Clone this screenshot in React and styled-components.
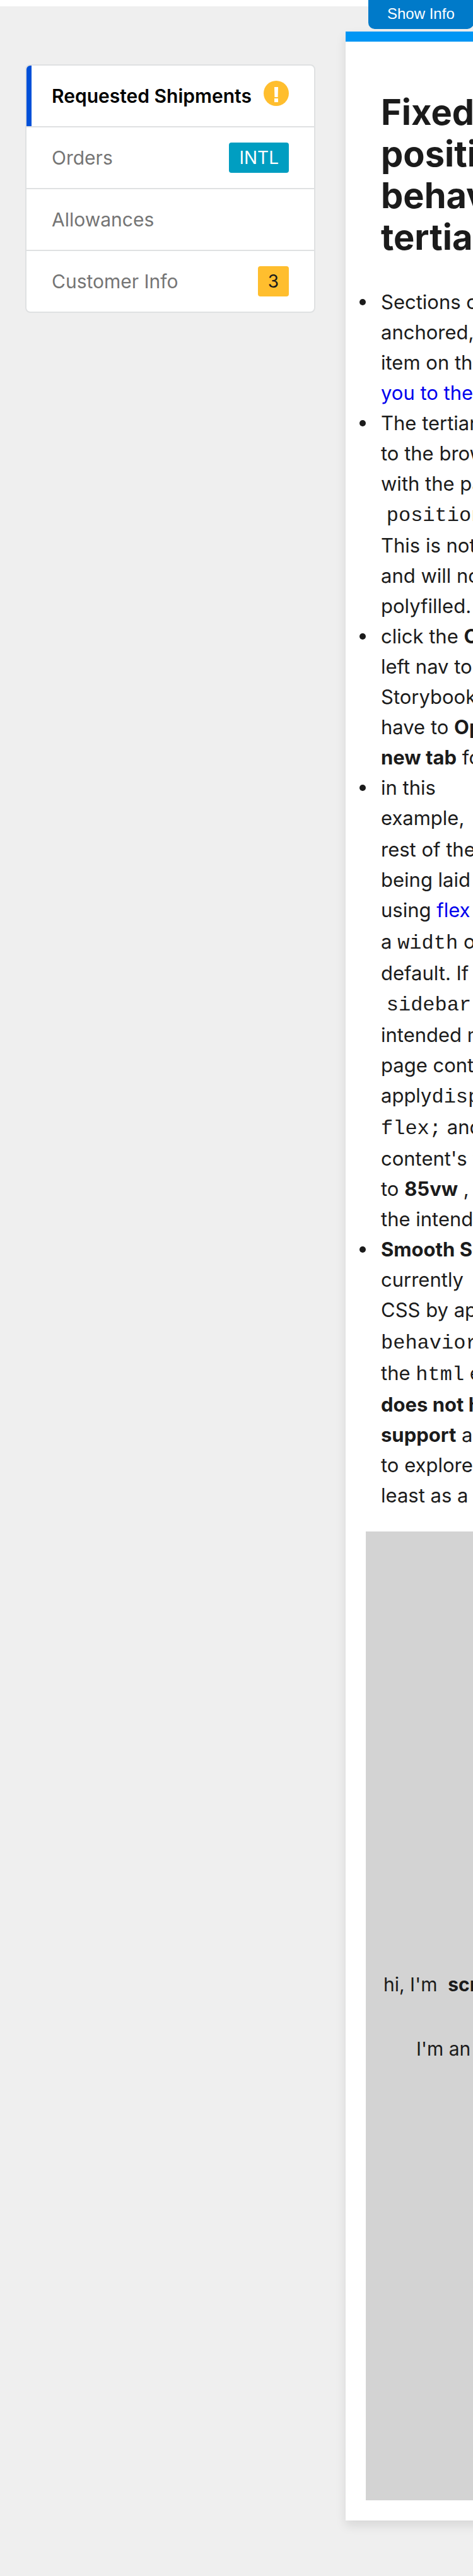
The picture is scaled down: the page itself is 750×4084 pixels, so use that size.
import React from "react";
import styled, { createGlobalStyle } from "styled-components";

const GlobalStyle = createGlobalStyle`
  * { box-sizing: border-box; }
  body {
    margin: 0;
    background: #efefef;
    color: #1b1b1b;
    font-family: Inter, "Liberation Sans", sans-serif;
    font-size: 30px;
    line-height: 48px;
  }
`;

const Page = styled.div`
  position: relative;
  overflow: hidden;
  padding-bottom: 88px;
`;

const TopBar = styled.header`
  height: 10px;
  background: #fff;
`;

const InfoButton = styled.button`
  position: absolute;
  top: 0;
  left: 584px;
  z-index: 1;
  height: 46px;
  padding: 0 30px 2px;
  border: 0;
  border-radius: 0 0 10px 10px;
  background: #007ac9;
  color: #fff;
  font-family: "Liberation Sans", Arial, sans-serif;
  font-size: 24px;
  line-height: 44px;
  white-space: nowrap;
`;

const Shell = styled.div`
  display: flex;
  align-items: flex-start;
  padding-top: 40px;
`;

const Sidebar = styled.nav`
  flex: 0 0 548px;
  padding: 52px 48px 0 40px;
`;

const NavList = styled.ul`
  list-style: none;
  margin: 0;
  padding: 0;
  border: 2px solid #dfe1e2;
  border-radius: 8px;
  background: #fff;
  overflow: hidden;
`;

const NavItem = styled.li`
  & + & { border-top: 2px solid #dfe1e2; }
`;

const NavLink = styled.a`
  display: flex;
  align-items: center;
  justify-content: space-between;
  height: 96px;
  padding: 0 40px;
  color: ${(p) => (p.$active ? "#000" : "#757575")};
  font-weight: ${(p) => (p.$active ? 600 : 400)};
  box-shadow: ${(p) => (p.$active ? "inset 8px 0 #0050d8" : "none")};
  text-decoration: none;
  white-space: nowrap;
`;

const Badge = styled.span`
  padding: 0 16px;
  border-radius: 4px;
  background: ${(p) => (p.$tone === "info" ? "#009ec1" : "#ffbe2e")};
  color: ${(p) => (p.$tone === "info" ? "#fff" : "#1b1b1b")};
  font-size: 28px;
`;

const AlertIcon = styled.svg`
  width: 40px;
  height: 40px;
  margin-bottom: 8px;
`;

const Card = styled.main`
  flex: 1 0 400px;
  padding: 79px 22px 32px;
  border-top: 16px solid #0096f4;
  background: #fff;
  box-shadow: 0 8px 16px rgba(0, 0, 0, 0.1);
  white-space: nowrap;
`;

const Title = styled.h1`
  margin: 0;
  padding-left: 34px;
  font-size: 56px;
  line-height: 66px;
  font-weight: 700;
`;

const Notes = styled.ul`
  margin: 0;
  padding: 46px 0 33px;
  list-style: none;
  font-size: 31px;
`;

const Note = styled.li`
  display: flex;
  gap: 24px;

  &::before {
    content: "";
    flex: none;
    width: 10px;
    height: 10px;
    margin-top: 19px;
    border-radius: 50%;
    background: #1b1b1b;
  }
`;

const Line = styled.span`
  display: block;
  height: ${(p) => (p.$tall ? "50px" : "48px")};
`;

const Code = styled.code`
  font-family: "Liberation Mono", monospace;
  font-size: 32px;
  line-height: 1;
`;

const TextLink = styled.a`
  color: #0000ee;
  text-decoration: none;
`;

const Scroller = styled.section`
  height: 1536px;
  margin: 0 10px;
  padding: 694px 28px 0;
  background: #d3d3d3;
`;

const Message = styled.p`
  margin: 0 0 54px;
  padding-left: ${(p) => (p.$inset ? "52px" : "0")};
`;

const items = [
  { label: "Requested Shipments", alert: true },
  { label: "Orders", badge: "INTL", tone: "info" },
  { label: "Allowances" },
  { label: "Customer Info", badge: "3", tone: "warning" },
];

function Alert() {
  return (
    <AlertIcon viewBox="0 0 40 40" role="img" aria-label="Attention">
      <circle cx="20" cy="20" r="20" fill="#ffbe2e" />
      <path d="M17 10h6l-.4 16h-5.2zM17 28h6v6h-6z" fill="#fff" />
    </AlertIcon>
  );
}

export default function App() {
  return (
    <Page>
      <GlobalStyle />
      <TopBar>
        <InfoButton type="button">Show Info</InfoButton>
      </TopBar>
      <Shell>
        <Sidebar aria-label="Tertiary">
          <NavList>
            {items.map((item, i) => (
              <NavItem key={item.label}>
                <NavLink href="#content" $active={i === 0}>
                  {item.label}
                  {item.alert && <Alert />}
                  {item.badge && <Badge $tone={item.tone}>{item.badge}</Badge>}
                </NavLink>
              </NavItem>
            ))}
          </NavList>
        </Sidebar>
        <Card id="content">
          <Title>
            Fixed<br />position<br />behavior<br />tertiary
          </Title>
          <Notes>
            <Note>
              <div>
                <Line>Sections can</Line>
                <Line>anchored, so</Line>
                <Line>item on the</Line>
                <Line><TextLink href="#content">you to the</TextLink></Line>
              </div>
            </Note>
            <Note>
              <div>
                <Line>The tertiary</Line>
                <Line>to the browser</Line>
                <Line>with the page</Line>
                <Line $tall>&nbsp;<Code>position</Code></Line>
                <Line>This is not</Line>
                <Line>and will not</Line>
                <Line>polyfilled.</Line>
              </div>
            </Note>
            <Note>
              <div>
                <Line>click the <b>Open</b></Line>
                <Line>left nav to</Line>
                <Line>Storybook</Line>
                <Line>have to <b>Open</b></Line>
                <Line><b>new tab</b> for</Line>
              </div>
            </Note>
            <Note>
              <div>
                <Line>in this</Line>
                <Line $tall>example,</Line>
                <Line>rest of the</Line>
                <Line>being laid</Line>
                <Line $tall>using <TextLink href="#content">flex</TextLink></Line>
                <Line $tall>a <Code>width</Code> of</Line>
                <Line>default. If</Line>
                <Line $tall>&nbsp;<Code>sidebar</Code></Line>
                <Line>intended main</Line>
                <Line>page content</Line>
                <Line $tall>apply<Code>display:</Code></Line>
                <Line $tall><Code>flex;</Code> and</Line>
                <Line>content's width</Line>
                <Line>to <b>85vw</b> ,</Line>
                <Line>the intended</Line>
              </div>
            </Note>
            <Note>
              <div>
                <Line><b>Smooth Scroll</b></Line>
                <Line>currently</Line>
                <Line $tall>CSS by applying</Line>
                <Line $tall><Code>behavior</Code></Line>
                <Line $tall>the <Code>html</Code> element</Line>
                <Line><b>does not have</b></Line>
                <Line><b>support</b> and</Line>
                <Line>to explore</Line>
                <Line>least as a</Line>
              </div>
            </Note>
          </Notes>
          <Scroller>
            <Message>hi, I'm &nbsp;<b>scrollable</b></Message>
            <Message $inset>I'm an</Message>
          </Scroller>
        </Card>
      </Shell>
    </Page>
  );
}
